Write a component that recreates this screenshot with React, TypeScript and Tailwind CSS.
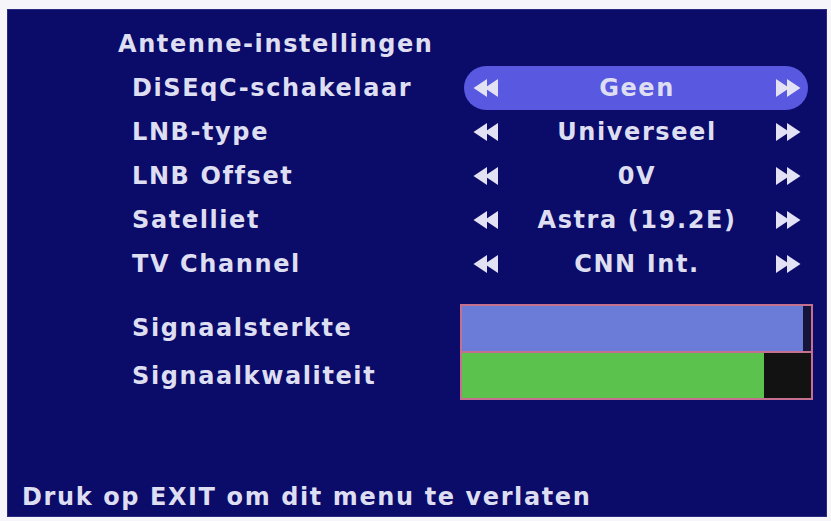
import React from "react";

const font = { fontFamily: '"DejaVu Sans", "Liberation Sans", sans-serif' };

const rows = [
  { label: "DiSEqC-schakelaar", value: "Geen", active: true },
  { label: "LNB-type", value: "Universeel" },
  { label: "LNB Offset", value: "0V" },
  { label: "Satelliet", value: "Astra (19.2E)" },
  { label: "TV Channel", value: "CNN Int." },
];

function Arrows({ dir }: { dir: "left" | "right" }) {
  return (
    <svg width="26" height="20" viewBox="0 0 26 20" className={dir === "right" ? "-scale-x-100" : ""}>
      <polygon points="0.5,10 14,1 14,19" fill="#e2e2f4" />
      <polygon points="11.5,10 25,1 25,19" fill="#e2e2f4" />
    </svg>
  );
}

export default function App() {
  return (
    <div className="w-[831px] h-[521px] bg-[#f6f6fa] pt-[9px] pl-[7px]" style={font}>
      <div className="w-[820px] h-[508px] bg-[#0b0b69] border border-[#2a2a80] flex flex-col font-bold text-[24px] tracking-[1.6px] text-[#dedef2]">
        <div className="pl-[110px] pt-[12px] h-[56px] leading-[44px]">Antenne-instellingen</div>

        {rows.map(r => (
          <div key={r.label} className="flex h-[44px] items-center pl-[124px]">
            <div className="w-[332px]">{r.label}</div>
            <div
              className={`w-[344px] h-[44px] flex items-center pl-[9px] pr-[7px] rounded-full ${
                r.active ? "bg-[#5858e0]" : ""
              }`}
            >
              <Arrows dir="left" />
              <div className="flex-1 text-center">{r.value}</div>
              <Arrows dir="right" />
            </div>
          </div>
        ))}

        <div className="flex pl-[124px] mt-[18px]">
          <div className="w-[328px]">
            <div className="h-[48px] leading-[48px]">Signaalsterkte</div>
            <div className="h-[48px] leading-[48px]">Signaalkwaliteit</div>
          </div>
          <div className="w-[353px] h-[96px] border-2 border-[#c4708e] flex flex-col">
            <div className="flex flex-1 border-b-2 border-[#c4708e]">
              <div className="bg-[#6b7bd8] w-[97.7%]" />
              <div className="bg-[#15153c] flex-1" />
            </div>
            <div className="flex flex-1">
              <div className="bg-[#5cc24e] w-[86.5%]" />
              <div className="bg-[#121212] flex-1" />
            </div>
          </div>
        </div>

        <div className="mt-auto pl-[14px] pb-[4px] leading-[30px]">Druk op EXIT om dit menu te verlaten</div>
      </div>
    </div>
  );
}
